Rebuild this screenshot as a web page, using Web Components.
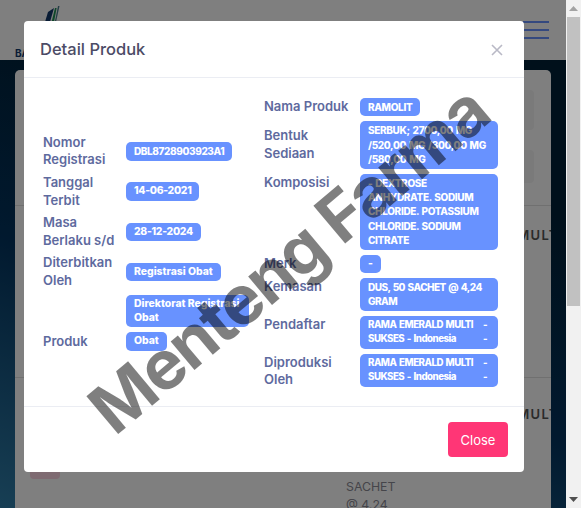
<!DOCTYPE html>
<html>
<head>
<meta charset="utf-8">
<title>Detail Produk</title>
<style>
    html, body { margin: 0; height: 100%; overflow: hidden; }
    body { font-family: Inter, "Liberation Sans", sans-serif; }
</style>
</head>
<body>
<app-shell>
    <page-header></page-header>
    <list-card>
        <filter-box style="height:40px"></filter-box>
        <filter-box style="height:33px"></filter-box>
        <list-row style="height:169px;--name-top:20px" name="RAMA EMERALD MULTI"></list-row>
        <list-row style="height:130px;--name-top:27px" name="RAMA EMERALD MULTI" pack="true"></list-row>
    </list-card>
    <product-modal slot="modal" heading="Detail Produk">
        <info-table>
            <info-row label="Nomor Registrasi"><info-pill style="font-size:10px;letter-spacing:-0.4px">DBL8728903923A1</info-pill></info-row>
            <info-row label="Tanggal Terbit"><info-pill style="letter-spacing:-0.3px">14-06-2021</info-pill></info-row>
            <info-row label="Masa Berlaku s/d"><info-pill style="letter-spacing:-0.3px">28-12-2024</info-pill></info-row>
            <info-row label="Diterbitkan Oleh"><info-pill>Registrasi Obat</info-pill></info-row>
            <info-row label=""><info-pill style="width:123px">Direktorat Registrasi<br>Obat</info-pill></info-row>
            <info-row label="Produk"><info-pill>Obat</info-pill></info-row>
        </info-table>
        <info-table slot="right" style="--label-width:96px">
            <info-row top label="Nama Produk"><info-pill class="caps">RAMOLIT</info-pill></info-row>
            <info-row label="Bentuk Sediaan"><info-pill class="caps" style="width:138px">SERBUK; 2700,00 MG<br>/520,00 MG /300,00 MG<br>/580,00 MG</info-pill></info-row>
            <info-row top label="Komposisi"><info-pill class="caps" style="width:138px">- DEXTROSE<br>ANHYDRATE. SODIUM<br>CHLORIDE. POTASSIUM<br>CHLORIDE. SODIUM<br>CITRATE</info-pill></info-row>
            <info-row top label="Merk"><info-pill>-</info-pill></info-row>
            <info-row top label="Kemasan"><info-pill class="caps" style="width:138px;letter-spacing:-0.55px">DUS, 50 SACHET @ 4,24<br>GRAM</info-pill></info-row>
            <info-row top label="Pendaftar"><info-pill class="caps" style="width:138px;font-size:9.7px;letter-spacing:-0.5px"><pill-line>RAMA EMERALD MULTI<span slot="end">-</span></pill-line><pill-line>SUKSES - Indonesia<span slot="end">-</span></pill-line></info-pill></info-row>
            <info-row top label="Diproduksi Oleh" style="margin-bottom:-2.4px"><info-pill class="caps" style="width:138px;font-size:9.7px;letter-spacing:-0.5px"><pill-line>RAMA EMERALD MULTI<span slot="end">-</span></pill-line><pill-line>SUKSES - Indonesia<span slot="end">-</span></pill-line></info-pill></info-row>
        </info-table>
    </product-modal>
    <water-mark slot="modal">Menteng Farma</water-mark>
</app-shell>

<script>
"use strict";
{
    const define = (name, css, html, extra = {}) => {
        class El extends HTMLElement {
            constructor() {
                super();
                const root = this.attachShadow({ mode: "open" });
                root.innerHTML = `<style>${css}</style>${html}`;
            }
            connectedCallback() {
                if (extra.init) extra.init(this, this.shadowRoot);
            }
        }
        customElements.define(name, El);
    };

    define("app-shell", /* css */ `
        :host { display: flex; width: 581px; height: 508px; overflow: hidden; position: relative; }
        .page {
            position: relative;
            flex: 1;
            min-width: 0;
            overflow: hidden;
            background: linear-gradient(200deg, #012036 0%, #012036 30%, #02335e 62%, #2f7ea9 100%);
        }
        .backdrop { position: absolute; inset: 0; z-index: 1; background: rgba(0, 0, 0, 0.5); }
        .bar { width: 15px; flex: none; background: #f1f1f1; display: flex; flex-direction: column; align-items: center; }
        .arrow { height: 17px; flex: none; display: flex; align-items: center; justify-content: center; }
        .thumb { width: 13px; height: 289px; background: #c1c1c1; flex: none; }
        .rest { flex: 1; }
    `, /* html */ `
        <div class="page">
            <slot></slot>
            <div class="backdrop"></div>
            <slot name="modal"></slot>
        </div>
        <div class="bar">
            <div class="arrow"><svg width="9" height="5" viewBox="0 0 9 5"><path d="M4.5 0 9 5H0z" fill="#a3a3a3"/></svg></div>
            <div class="thumb"></div>
            <div class="rest"></div>
            <div class="arrow"><svg width="9" height="5" viewBox="0 0 9 5"><path d="M0 0h9L4.5 5z" fill="#505050"/></svg></div>
        </div>
    `);

    define("page-header", /* css */ `
        :host { display: flex; justify-content: space-between; height: 60px; background: #fff; padding: 0 17px 0 15px; box-sizing: border-box; }
        .brand { display: flex; flex-direction: column; }
        .brand svg { margin: 6px 0 0 30px; }
        .brand b { font: 700 10px/12px Inter, sans-serif; color: #12386b; margin-top: 25px; }
        .menu { display: flex; flex-direction: column; gap: 6px; width: 26px; padding-top: 21px; }
        .menu i { display: block; height: 2px; background: #6892ff; }
    `, /* html */ `
        <div class="brand">
            <svg width="15" height="16" viewBox="0 0 15 16">
                <path d="M3 6 9 2 5 16H0z" fill="#12386b"/>
                <path d="M10 2h1.6L9 16H6.6z" fill="#1f8f55"/>
                <path d="M13 0h1.5L11 16H9.8z" fill="#4a7c8c"/>
            </svg>
            <b>BA</b>
        </div>
        <div class="menu"><i></i><i></i><i></i></div>
    `);

    define("list-card", /* css */ `
        :host { display: flex; flex-direction: column; margin: 10px 15px 0; height: 500px; background: #fff; border-radius: 5px; overflow: hidden; padding-top: 20px; box-sizing: border-box; }
    `, `<slot></slot>`);

    define("filter-box", /* css */ `
        :host { display: block; margin: 0 17px 20px; background: #f5f5f5; border-radius: 4px; flex: none; }
    `, ``);

    define("list-row", /* css */ `
        :host { display: block; flex: none; border-top: 1px solid #e0e0e0; margin-top: 2px; position: relative; }
        .name { font: 600 13px/18px Inter, sans-serif; letter-spacing: 1.3px; color: #555; white-space: nowrap; margin: var(--name-top) 0 0 377px; }
        .pack { font: 400 12.3px/17.6px Inter, sans-serif; color: #8a8a94; margin: 55px 0 0 331px; }
        .btn { position: absolute; top: 71px; left: 15px; width: 30px; height: 30px; background: #ffd6e4; border-radius: 4px; }
        [hidden] { display: none; }
    `, /* html */ `
        <div class="name"></div>
        <div class="btn" hidden></div>
        <div class="pack" hidden>SACHET<br>@ 4,24</div>
    `, {
        init(el, root) {
            root.querySelector(".name").textContent = el.getAttribute("name");
            if (el.hasAttribute("pack")) {
                root.querySelector(".pack").hidden = false;
                root.querySelector(".btn").hidden = false;
            }
        },
    });

    define("product-modal", /* css */ `
        :host { position: absolute; z-index: 2; top: 21px; left: 24px; width: 500px; background: #fff; border-radius: 4px; color: #4b4b63; }
        header { display: flex; justify-content: space-between; align-items: center; height: 56px; padding: 0 21px 0 16px; border-bottom: 1px solid #ebedf3; }
        h5 { margin: 0; font: 450 16.5px/24px Inter, sans-serif; color: #4c4c66; }
        header svg { margin-top: 2px; }
        main { display: flex; align-items: center; padding: 20px 0 20px 19px; border-bottom: 1px solid #ebedf3; }
        .left { flex: 0 0 221px; }
        footer { display: flex; justify-content: flex-end; padding: 15px 16px; }
        button { width: 60px; height: 35px; border: 0; border-radius: 4px; background: #ff3676; color: #fff; font: 400 13px Inter, sans-serif; padding: 0; }
    `, /* html */ `
        <header>
            <h5></h5>
            <svg width="12" height="12" viewBox="0 0 12 12"><path d="M1 1l10 10M11 1 1 11" stroke="#b9b9c6" stroke-width="1.6" fill="none"/></svg>
        </header>
        <main>
            <div class="left"><slot></slot></div>
            <div><slot name="right"></slot></div>
        </main>
        <footer><button>Close</button></footer>
    `, {
        init(el, root) {
            root.querySelector("h5").textContent = el.getAttribute("heading");
        },
    });

    define("info-table", /* css */ `
        :host { display: flex; flex-direction: column; gap: 5px; --label-width: 83px; }
    `, `<slot></slot>`);

    define("info-row", /* css */ `
        :host { display: grid; grid-template-columns: var(--label-width) 1fr; align-items: center; }
        :host([top]) { align-items: start; }
        .label { font: 600 13px/17.6px Inter, sans-serif; color: #5e6a9e; }
        .label:empty { height: 0; }
    `, /* html */ `
        <div class="label"></div>
        <div><slot></slot></div>
    `, {
        init(el, root) {
            root.querySelector(".label").textContent = el.getAttribute("label");
        },
    });

    define("info-pill", /* css */ `
        :host { display: block; width: fit-content; box-sizing: border-box; padding: 2px 8px; background: #6892ff; color: #fff; border-radius: 5px; font: 800 10.4px/14.4px Inter, sans-serif; letter-spacing: 0; white-space: nowrap; }
        :host(.caps) { font-size: 10px; letter-spacing: -0.35px; word-spacing: 1px; }
    `, `<slot></slot>`);

    define("pill-line", /* css */ `
        :host { display: flex; justify-content: space-between; padding-right: 3px; }
    `, `<slot></slot><slot name="end"></slot>`);

    define("water-mark", /* css */ `
        :host { position: absolute; z-index: 3; left: 288px; top: 259px; transform: translate(-50%, -50%) rotate(-40deg); white-space: nowrap; font: 700 68px/1 Inter, sans-serif; letter-spacing: -2px; color: rgba(0, 0, 0, 0.5); pointer-events: none; }
    `, `<slot></slot>`);
}
</script>
</body>
</html>
